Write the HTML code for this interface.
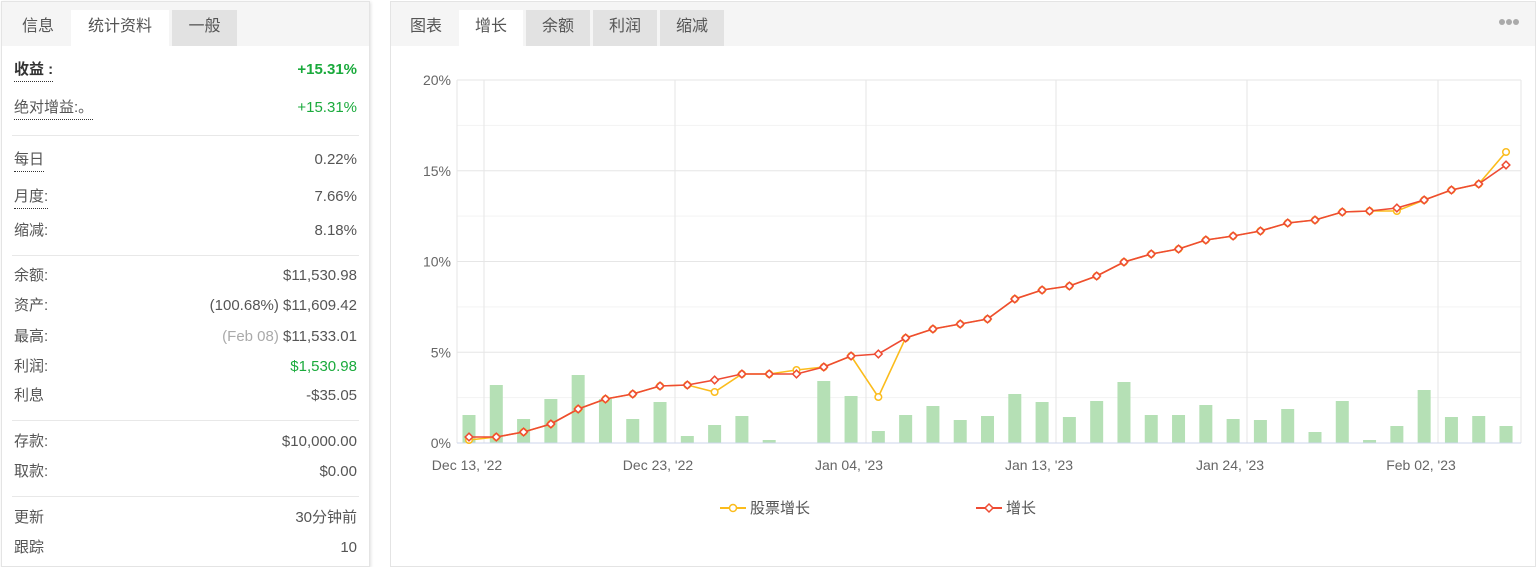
<!DOCTYPE html>
<html><head><meta charset="utf-8"><style>
body{margin:0;width:1536px;height:567px;background:#fff;font-family:"Liberation Sans","Noto Sans CJK SC",sans-serif;overflow:hidden;position:relative;color:#444}
.lp{position:absolute;left:1px;top:1px;width:367px;height:564px;border:1px solid #e4e4e4;box-shadow:1px 1px 3px rgba(0,0,0,.12)}
.rp{position:absolute;left:390px;top:1px;width:1144px;height:564px;border:1px solid #e4e4e4}
.tabs{height:44px;background:#f5f5f5;position:relative}
.tab{position:absolute;top:8px;height:37px;line-height:34px;font-size:16px;color:#555;text-align:center}
.tab.a{background:#fff}
.tab.g{background:#e2e2e2;height:36px}
.row{position:absolute;left:12px;right:12px;font-size:15px;color:#555;height:22px;line-height:22px}
.row span{line-height:22px}
.row .l{position:absolute;left:0;top:0}
.row .r{position:absolute;right:0;top:0}
.u{border-bottom:1px dotted #333}
.hr{position:absolute;left:10px;right:10px;height:1px;background:#e8e8e8}
.gr{color:#1aaa3c}
</style></head><body>
<div class="lp">
 <div class="tabs">
  <div class="tab" style="left:4px;width:64px">信息</div>
  <div class="tab a" style="left:69px;width:98px">统计资料</div>
  <div class="tab g" style="left:170px;width:65px">一般</div>
 </div>
 <div class="row" style="top:57px"><span class="l u" style="font-weight:bold;color:#333">收益 :</span><span class="r gr" style="font-weight:bold">+15.31%</span></div>
 <div class="row" style="top:95px"><span class="l u">绝对增益:。</span><span class="r gr">+15.31%</span></div>
 <div class="hr" style="top:133px"></div>
 <div class="row" style="top:147px"><span class="l u">每日</span><span class="r">0.22%</span></div>
 <div class="row" style="top:184px"><span class="l u">月度:</span><span class="r">7.66%</span></div>
 <div class="row" style="top:218px"><span class="l">缩减:</span><span class="r">8.18%</span></div>
 <div class="hr" style="top:253px"></div>
 <div class="row" style="top:263px"><span class="l">余额:</span><span class="r">$11,530.98</span></div>
 <div class="row" style="top:293px"><span class="l">资产:</span><span class="r">(100.68%) $11,609.42</span></div>
 <div class="row" style="top:324px"><span class="l">最高:</span><span class="r"><span style="color:#aaa">(Feb 08)</span> $11,533.01</span></div>
 <div class="row" style="top:354px"><span class="l">利润:</span><span class="r gr">$1,530.98</span></div>
 <div class="row" style="top:383px"><span class="l">利息</span><span class="r">-$35.05</span></div>
 <div class="hr" style="top:418px"></div>
 <div class="row" style="top:429px"><span class="l">存款:</span><span class="r">$10,000.00</span></div>
 <div class="row" style="top:459px"><span class="l">取款:</span><span class="r">$0.00</span></div>
 <div class="hr" style="top:494px"></div>
 <div class="row" style="top:505px"><span class="l">更新</span><span class="r">30分钟前</span></div>
 <div class="row" style="top:535px"><span class="l">跟踪</span><span class="r">10</span></div>
</div>
<div class="rp">
 <div class="tabs">
  <div class="tab" style="left:4px;width:62px">图表</div>
  <div class="tab a" style="left:68px;width:64px">增长</div>
  <div class="tab g" style="left:135px;width:64px">余额</div>
  <div class="tab g" style="left:202px;width:64px">利润</div>
  <div class="tab g" style="left:269px;width:64px">缩减</div>
  <div style="position:absolute;right:16px;top:17px;font-size:0">
   <span style="display:inline-block;width:6px;height:6px;border-radius:3px;background:#aaa;margin-left:1px"></span><span style="display:inline-block;width:6px;height:6px;border-radius:3px;background:#aaa;margin-left:1px"></span><span style="display:inline-block;width:6px;height:6px;border-radius:3px;background:#aaa;margin-left:1px"></span>
  </div>
 </div>
</div>
<svg id="c" width="1536" height="567" style="position:absolute;left:0;top:0" xmlns="http://www.w3.org/2000/svg" font-family="Liberation Sans, Noto Sans CJK SC, sans-serif"></svg>
<script>
var s='';
var X0=457,X1=1521;
for(var i=0;i<=8;i++){var y=80+i*45.375;s+='<line x1="'+X0+'" x2="'+X1+'" y1="'+y+'" y2="'+y+'" stroke="'+(i%2?'#f3f3f3':'#e6e6e6')+'"/>';}
s+='<line x1="'+X0+'" x2="'+X0+'" y1="80" y2="443" stroke="#e6e6e6"/><line x1="'+X1+'" x2="'+X1+'" y1="80" y2="443" stroke="#e6e6e6"/>';
var vx=[484,675,866,1056,1247,1438],lb=["Dec 13, '22","Dec 23, '22","Jan 04, '23","Jan 13, '23","Jan 24, '23","Feb 02, '23"];
vx.forEach(function(x,k){s+='<line x1="'+x+'" x2="'+x+'" y1="80" y2="443" stroke="#e6e6e6"/><text x="'+(x-17)+'" y="470" text-anchor="middle" font-size="14" fill="#666">'+lb[k]+'</text>';});
['20%','15%','10%','5%','0%'].forEach(function(t,k){s+='<text x="451" y="'+(85+k*90.75)+'" text-anchor="end" font-size="14" fill="#666">'+t+'</text>';});
var bars=[415,385,419,399,375,399,419,402,436,425,416,440,443,381,396,431,415,406,420,416,394,402,417,401,382,415,415,405,419,420,409,432,401,440,426,390,417,416,426];
var red=[437,437,432,424,409,399,394,386,385,380,374,374,374,367,356,354,338,329,324,319,299,290,286,276,262,254,249,240,236,231,223,220,212,211,208,200,190,184,165];
var yel=red.slice();yel[0]=440;yel[9]=392;yel[12]=370;yel[15]=397;yel[34]=211;yel[38]=152;
function px(i){return 469+i*27.29;}
bars.forEach(function(b,i){if(b<443)s+='<rect x="'+(px(i)-6.5)+'" y="'+b+'" width="13" height="'+(443-b)+'" fill="#b5e0b5"/>';});
s+='<line x1="'+X0+'" x2="'+X1+'" y1="443" y2="443" stroke="#ccd6eb"/>';
function pl(a,c){return '<polyline fill="none" stroke="'+c+'" stroke-width="1.6" points="'+a.map(function(y,i){return px(i).toFixed(1)+','+y}).join(' ')+'"/>';}
s+=pl(yel,'#fbbc1c');
yel.forEach(function(y,i){s+='<circle cx="'+px(i)+'" cy="'+y+'" r="3.3" fill="#fff" stroke="#fbbc1c" stroke-width="1.5"/>';});
s+=pl(red,'#ee4b33');
red.forEach(function(y,i){var x=px(i);s+='<path d="M'+x+' '+(y-3.8)+'L'+(x+3.8)+' '+y+'L'+x+' '+(y+3.8)+'L'+(x-3.8)+' '+y+'Z" fill="#fff" stroke="#ee4b33" stroke-width="1.5"/>';});
s+='<line x1="720" x2="746" y1="508" y2="508" stroke="#fbbc1c" stroke-width="2"/><circle cx="733" cy="508" r="3.5" fill="#fff" stroke="#fbbc1c" stroke-width="1.5"/><text x="750" y="513" font-size="15" fill="#555">股票增长</text>';
s+='<line x1="976" x2="1002" y1="508" y2="508" stroke="#ee4b33" stroke-width="2"/><path d="M989 504L993 508L989 512L985 508Z" fill="#fff" stroke="#ee4b33" stroke-width="1.5"/><text x="1006" y="513" font-size="15" fill="#555">增长</text>';
document.getElementById('c').innerHTML=s;
</script>
</body></html>
